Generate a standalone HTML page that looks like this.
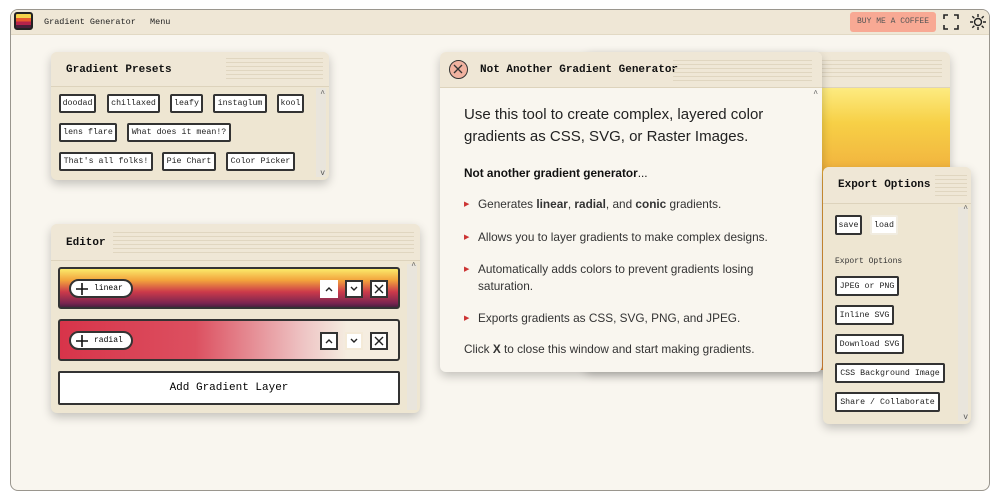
<!DOCTYPE html>
<html><head><style>
*{box-sizing:border-box;margin:0;padding:0}
body{width:1000px;height:500px;background:#fff;font-family:"Liberation Mono",monospace;position:relative;overflow:hidden}
.frame{position:absolute;left:10px;top:9px;width:980px;height:482px;border:1.5px solid #9a968e;border-radius:8px;background:#f9f6ef;overflow:hidden}
.hdr{position:absolute;left:0;top:0;right:0;height:25px;background:#efe7d6;border-bottom:1px solid #e2d9c4}
.win{position:absolute;background:#eee6d2;border-radius:6px;box-shadow:0 4px 10px rgba(0,0,0,.22)}
.tb{position:absolute;left:0;right:0;top:0;border-bottom:1px solid #ddd3bc;background:#efe7d6;border-radius:6px 6px 0 0}
.tt{position:absolute;font-weight:bold;font-size:11px;color:#111}
.lines{position:absolute;background:repeating-linear-gradient(#e0d6c0 0 1px,transparent 1px 4px)}
.btn{position:absolute;border:2px solid #333;background:#fff;font-size:8.3px;height:19px;display:flex;align-items:center;justify-content:center;border-radius:2px;color:#222;white-space:nowrap}
.sb{position:absolute;font-size:8px;color:#555}
.layer{position:absolute;left:7px;width:342px;border:2px solid #333;border-radius:3px;height:42px}
.pill{position:absolute;left:9px;top:10px;width:64px;height:19px;border:2px solid #333;border-radius:10px;background:#fff;font-size:8px;display:flex;align-items:center;padding-left:23px}
.pill svg{position:absolute;left:5px;top:2px}
.sq{position:absolute;top:11px;width:18px;height:18px;border:2px solid #333;background:#fff}
.sq svg{position:absolute;left:2px;top:2px}
.sans{font-family:"Liberation Sans",sans-serif}
</style></head><body>
<div class="frame">
 <div class="hdr">
  <div style="position:absolute;left:3px;top:2px;width:19px;height:18px;border:2px solid #222;border-radius:3px;background:linear-gradient(#f5d34a 0 30%,#e85a2e 30% 55%,#b5234a 55% 80%,#4a1f3a 80%)"></div>
  <div style="position:absolute;left:33px;top:7px;font-size:8.5px;color:#222">Gradient Generator</div>
  <div style="position:absolute;left:139px;top:7px;font-size:8.5px;color:#222">Menu</div>
  <div style="position:absolute;left:839px;top:2px;width:86px;height:20px;background:#f8a994;border-radius:3px;font-size:8px;color:#555;text-align:center;line-height:20px">BUY ME A COFFEE</div>
  <svg style="position:absolute;left:932px;top:4px" width="16" height="16" viewBox="0 0 16 16" fill="none" stroke="#222" stroke-width="1.6"><path d="M1 5V1h4M11 1h4v4M15 11v4h-4M5 15H1v-4"/></svg>
  <svg style="position:absolute;left:958px;top:3px" width="18" height="18" viewBox="0 0 18 18" fill="none" stroke="#222" stroke-width="1.4"><circle cx="9" cy="9" r="3.5"/><path d="M9 1v3M9 14v3M1 9h3M14 9h3M3.3 3.3l2 2M12.7 12.7l2 2M3.3 14.7l2-2M12.7 5.3l2-2"/></svg>
 </div>
</div>

<div class="win" style="left:585px;top:52px;width:365px;height:318px">
 <div class="tb" style="height:36px"><div class="lines" style="left:8px;right:8px;top:8px;height:20px"></div></div>
 <div style="position:absolute;left:0;right:0;top:36px;bottom:0;background:linear-gradient(#fdeb80 0,#f7d046 35px,#efa83c 100px,#e8903a)"></div>
</div>

<div class="win" style="left:51px;top:52px;width:278px;height:128px">
 <div class="tb" style="height:35px"><div class="tt" style="left:15px;top:12px">Gradient Presets</div><div class="lines" style="left:175px;right:6px;top:6px;height:22px"></div></div>
 <div style="position:absolute;right:3px;top:36px;width:10px;bottom:3px;background:#e9e5dc"></div>
 <div class="sb" style="right:4px;top:38px">^</div><div class="sb" style="right:4px;bottom:2px">v</div>
 <div class="btn" style="left:8px;top:42px;width:37px">doodad</div>
 <div class="btn" style="left:56px;top:42px;width:53px">chillaxed</div>
 <div class="btn" style="left:119px;top:42px;width:33px">leafy</div>
 <div class="btn" style="left:162px;top:42px;width:54px">instaglum</div>
 <div class="btn" style="left:226px;top:42px;width:27px">kool</div>
 <div class="btn" style="left:8px;top:71px;width:58px">lens flare</div>
 <div class="btn" style="left:76px;top:71px;width:104px">What does it mean!?</div>
 <div class="btn" style="left:8px;top:100px;width:94px">That's all folks!</div>
 <div class="btn" style="left:111px;top:100px;width:54px">Pie Chart</div>
 <div class="btn" style="left:175px;top:100px;width:69px">Color Picker</div>
</div>

<div class="win" style="left:51px;top:224px;width:369px;height:189px">
 <div class="tb" style="height:37px"><div class="tt" style="left:15px;top:13px">Editor</div><div class="lines" style="left:62px;right:6px;top:8px;height:22px"></div></div>
 <div style="position:absolute;right:3px;top:40px;width:10px;bottom:3px;background:#e9e5dc"></div>
 <div class="sb" style="right:4px;top:38px">^</div>
 <div class="layer" style="top:43px;background:linear-gradient(#fbe96a,#f2a23c 30%,#cc3a4a 60%,#7a2550 90%,#4a2040)">
  <div class="pill"><svg width="12" height="12" viewBox="0 0 12 12" stroke="#111" stroke-width="1.6"><path d="M6 0v12M0 6h12"/></svg>linear</div>
  <div class="sq" style="left:260px;border-color:#fff"><svg width="10" height="10" viewBox="0 0 10 10" fill="none" stroke="#222" stroke-width="1.4"><path d="M2 7l3-3 3 3"/></svg></div>
  <div class="sq" style="left:285px"><svg width="10" height="10" viewBox="0 0 10 10" fill="none" stroke="#222" stroke-width="1.4"><path d="M2 3l3 3 3-3"/></svg></div>
  <div class="sq" style="left:310px"><svg width="10" height="10" viewBox="0 0 10 10" fill="none" stroke="#222" stroke-width="1.4"><path d="M1 1l8 8M9 1l-8 8"/></svg></div>
 </div>
 <div class="layer" style="top:95px;background:linear-gradient(90deg,#d8344a,#dc5060 40%,#eec4c4 72%,#f5ede0 85%)">
  <div class="pill"><svg width="12" height="12" viewBox="0 0 12 12" stroke="#111" stroke-width="1.6"><path d="M6 0v12M0 6h12"/></svg>radial</div>
  <div class="sq" style="left:260px"><svg width="10" height="10" viewBox="0 0 10 10" fill="none" stroke="#222" stroke-width="1.4"><path d="M2 7l3-3 3 3"/></svg></div>
  <div class="sq" style="left:285px;border-color:#f4ead8"><svg width="10" height="10" viewBox="0 0 10 10" fill="none" stroke="#222" stroke-width="1.4"><path d="M2 3l3 3 3-3"/></svg></div>
  <div class="sq" style="left:310px"><svg width="10" height="10" viewBox="0 0 10 10" fill="none" stroke="#222" stroke-width="1.4"><path d="M1 1l8 8M9 1l-8 8"/></svg></div>
 </div>
 <div style="position:absolute;left:7px;top:147px;width:342px;height:34px;border:2px solid #333;border-radius:2px;background:#fff;font-size:11px;text-align:center;line-height:30px">Add Gradient Layer</div>
</div>

<div class="win" style="left:440px;top:52px;width:382px;height:320px;background:#f9f6ef">
 <div class="tb" style="height:36px">
  <div style="position:absolute;left:9px;top:8px;width:19px;height:19px;border:1.5px solid #333;border-radius:50%;background:#f0b2a0"><svg style="position:absolute;left:3px;top:3px" width="10" height="10" viewBox="0 0 10 10" fill="none" stroke="#333" stroke-width="1.3"><path d="M1 1l8 8M9 1l-8 8"/></svg></div>
  <div class="tt" style="left:40px;top:12px">Not Another Gradient Generator</div>
  <div class="lines" style="left:233px;right:10px;top:8px;height:22px"></div>
 </div>
 <div class="sb" style="right:4px;top:38px">^</div>
 <div class="sans" style="position:absolute;left:24px;top:52px;width:310px;font-size:15px;line-height:22px;color:#222">Use this tool to create complex, layered color gradients as CSS, SVG, or Raster Images.</div>
 <div class="sans" style="position:absolute;left:24px;top:114px;font-size:11.8px;color:#111"><b>Not another gradient generator</b>...</div>
 <div class="sans" style="position:absolute;left:24px;top:144px;width:310px;font-size:11.8px;color:#333;line-height:17px">
  <div style="position:relative;padding-left:14px;margin-bottom:16px"><span style="position:absolute;left:0;color:#c33;font-size:7px">▶</span>Generates <b>linear</b>, <b>radial</b>, and <b>conic</b> gradients.</div>
  <div style="position:relative;padding-left:14px;margin-bottom:15px"><span style="position:absolute;left:0;color:#c33;font-size:7px">▶</span>Allows you to layer gradients to make complex designs.</div>
  <div style="position:relative;padding-left:14px;margin-bottom:15px;width:300px"><span style="position:absolute;left:0;color:#c33;font-size:7px">▶</span>Automatically adds colors to prevent gradients losing saturation.</div>
  <div style="position:relative;padding-left:14px;margin-bottom:14px"><span style="position:absolute;left:0;color:#c33;font-size:7px">▶</span>Exports gradients as CSS, SVG, PNG, and JPEG.</div>
  <div>Click <b>X</b> to close this window and start making gradients.</div>
 </div>
</div>

<div class="win" style="left:823px;top:167px;width:148px;height:257px">
 <div class="tb" style="height:37px"><div class="tt" style="left:15px;top:12px">Export Options</div><div class="lines" style="left:112px;right:4px;top:8px;height:22px"></div></div>
 <div style="position:absolute;right:3px;top:40px;width:10px;bottom:3px;background:#e9e5dc"></div>
 <div class="sb" style="right:3px;top:38px">^</div><div class="sb" style="right:3px;bottom:2px">v</div>
 <div class="btn" style="left:12px;top:48px;height:20px;width:27px">save</div>
 <div class="btn" style="left:47px;top:48px;height:20px;width:28px;border-color:#f1ece0">load</div>
 <div style="position:absolute;left:12px;top:90px;font-size:8px;color:#333">Export Options</div>
 <div class="btn" style="left:12px;top:109px;height:20px;width:64px">JPEG or PNG</div>
 <div class="btn" style="left:12px;top:138px;height:20px;width:59px">Inline SVG</div>
 <div class="btn" style="left:12px;top:167px;height:20px;width:69px">Download SVG</div>
 <div class="btn" style="left:12px;top:196px;height:20px;width:110px">CSS Background Image</div>
 <div class="btn" style="left:12px;top:225px;height:20px;width:105px">Share / Collaborate</div>
</div>
</body></html>
